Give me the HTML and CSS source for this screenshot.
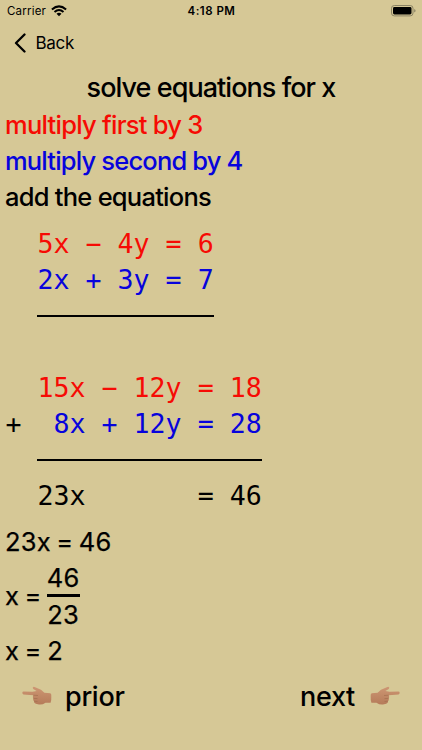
FILE: index.html
```html
<!DOCTYPE html>
<html lang="en">
<head>
<meta charset="utf-8">
<title>Equations</title>
<link rel="stylesheet" href="styles.css">
</head>
<body>
<div class="status">
  <div class="carrier"><span>Carrier</span>
    <svg class="wifi" viewBox="0 0 16 12"><path d="M.9 4.5Q8-1.8 15.1 4.5M3.5 7Q8 3.1 12.5 7" fill="none" stroke="#000" stroke-width="2"/><path d="M5.5 8.7Q8 6.6 10.5 8.7L8 11.3Z"/></svg>
  </div>
  <div class="time">4:18 PM</div>
  <svg class="battery" viewBox="0 0 25 12"><rect x=".5" y=".5" width="21.5" height="10.4" rx="2.8" fill="none" stroke="#8b8364"/><rect x="2" y="2" width="18.5" height="7.4" rx="1.4"/><path d="M23.2 4v3.6q1.4-.5 1.4-1.8T23.2 4Z" fill="#8b8364"/></svg>
</div>
<nav class="nav"><svg class="chevron" viewBox="0 0 12 20"><path d="M10.5 1.5 2 10l8.5 8.5" fill="none" stroke="#000" stroke-width="2.3" stroke-linecap="round" stroke-linejoin="round"/></svg><span>Back</span></nav>
<h1 class="row title"><span>solve equations for x</span></h1>
<div class="row red first">multiply first by 3</div>
<div class="row blue second">multiply second by 4</div>
<div class="row third">add the equations</div>
<div class="work">
<div class="mono red">  5x − 4y = 6</div>
<div class="mono blue">  2x + 3y = 7</div>
<div class="rule"><hr></div>
<div class="mono"></div>
<div class="mono red">  15x − 12y = 18</div>
<div class="mono">+ <span class="blue"> 8x + 12y = 28</span></div>
<div class="rule long"><hr></div>
<div class="mono">  23x       = 46</div>
</div>
<div class="row math">23x = 46</div>
<div class="fraction-row math"><span>x =</span><span class="fraction"><span class="num">46</span><span class="den">23</span></span></div>
<div class="row math">x = 2</div>
<footer class="footer">
  <div class="prior"><svg class="hand" viewBox="0 0 30 20"><use href="#hand"/></svg><span>prior</span></div>
  <div class="next"><span>next</span><svg class="hand flip" viewBox="0 0 30 20">
    <defs><linearGradient id="skin" x1="0" y1="0" x2="0" y2="1"><stop offset="0" stop-color="#cd9673"/><stop offset="1" stop-color="#b57b59"/></linearGradient></defs>
    <g id="hand"><path d="M1.5 5.6 10.5 5.7 14.6 5 11.3 3.1Q10 1.5 11.3.9 12 .6 13.8 1.5L19 3.7 22.4 6.7 28.4 7.3Q29.7 8 29.3 11 29.5 15 28.6 16.7L23.5 16.7Q20.5 18.9 17 18.5L13.8 17.7Q11.7 17.1 12 15.2 10.7 14 11.3 12.4 10.3 11 11.3 9.2L1.5 8.4Q.3 8 .3 6.8.5 5.6 1.5 5.6Z" fill="url(#skin)"/><path d="M11.3 9.2 16 9.5M11.4 12.4 15.5 12.6M12.1 15.2 15.5 15.4" fill="none" stroke="#986547" stroke-width=".5"/></g></svg></div>
</footer>
</body>
</html>
```
FILE: styles.css
```css
* { box-sizing: border-box; }
body { margin: 0; width: 422px; height: 750px; overflow: hidden; background: #d6c896; color: #000; font-family: Inter, sans-serif; }
svg { display: block; }
.status { display: grid; grid-template-columns: 1fr auto 1fr; align-items: center; height: 22px; padding: 0 6px 0 7px; font-size: 11.5px; }
.carrier { display: flex; align-items: center; gap: 5px; letter-spacing: .2px; }
.wifi { width: 16px; height: 12px; }
.time { font-weight: 600; letter-spacing: .5px; }
.battery { width: 25px; height: 12px; justify-self: end; }
.nav { display: flex; align-items: center; gap: 10px; height: 42px; padding-left: 13.5px; font-size: 17px; letter-spacing: -.3px; }
.chevron { width: 12px; height: 20px; }
.row { display: flex; align-items: center; height: 36px; padding-left: 5px; font-size: 25.5px; font-weight: 500; letter-spacing: -.75px; white-space: pre; }
.title { justify-content: center; margin: 5px 0 1px; padding: 0; font-size: 27px; letter-spacing: -.95px; }
.second { letter-spacing: -.82px; }
.red { color: #f60b04; }
.blue { color: #0703dc; }
.work { margin: 12px 0 9px; }
.mono { height: 36px; padding-left: 5.5px; font: 26.6px/36px "DejaVu Sans Mono", monospace; letter-spacing: 0; white-space: pre; }
.rule { display: flex; align-items: center; height: 36px; padding-left: 37px; }
.rule hr { width: 177px; height: 2px; margin: 0; border: 0; background: #000; }
.long hr { width: 225px; }
.math { font-size: 25.5px; font-weight: 400; letter-spacing: .2px; word-spacing: -1.9px; -webkit-text-stroke: .25px #000; }
.fraction-row { display: flex; align-items: center; height: 73px; padding-left: 5px; gap: 5px; }
.fraction { display: flex; flex-direction: column; width: 33px; text-align: center; }
.num, .den { height: 35px; line-height: 35px; }
.num { height: 37px; border-bottom: 3px solid #000; }
.footer { display: flex; justify-content: space-between; align-items: center; height: 36px; margin-top: 10px; padding: 0 22px; font-size: 27px; font-weight: 500; letter-spacing: -.3px; }
.prior, .next { display: flex; align-items: center; gap: 13px; }
.next { gap: 15px; }
.hand { width: 30px; height: 20px; }
.flip { transform: scaleX(-1); }
```
